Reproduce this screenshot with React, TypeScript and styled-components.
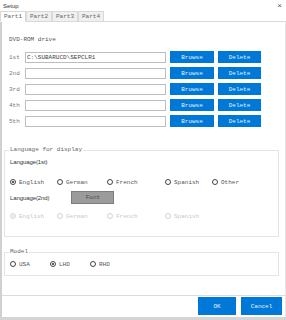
import React, { useState } from "react";
import styled, { createGlobalStyle } from "styled-components";

const GlobalStyle = createGlobalStyle`
  html, body {
    margin: 0;
    padding: 0;
    background: #ffffff;
  }
  * {
    box-sizing: border-box;
  }
`;

const Window = styled.div`
  width: 286px;
  height: 320px;
  display: flex;
  flex-direction: column;
  background: #ffffff;
  font-family: "Liberation Mono", monospace;
  font-size: 6px;
  color: #555;
  border-bottom: 3px solid #d4d4d4;
`;

const TitleBar = styled.div`
  height: 11px;
  display: flex;
  align-items: center;
  justify-content: space-between;
  padding: 0 4px 0 3px;
  font-family: "Liberation Sans", sans-serif;
  font-size: 6px;
  color: #333;
`;

const CloseGlyph = styled.span`
  font-size: 8px;
  line-height: 8px;
  color: #555;
`;

const TabBar = styled.div`
  height: 11px;
  display: flex;
  align-items: flex-end;
  border-bottom: 1px solid #d9d9d9;
`;

const Tab = styled.div<{ active?: boolean }>`
  width: 26px;
  height: ${(p) => (p.active ? "11px" : "10px")};
  display: flex;
  align-items: center;
  justify-content: center;
  background: ${(p) => (p.active ? "#ffffff" : "#f0f0f0")};
  border: 1px solid #d9d9d9;
  border-bottom: ${(p) => (p.active ? "1px solid #ffffff" : "none")};
  margin-bottom: ${(p) => (p.active ? "-1px" : "0")};
  color: #666;
  font-size: 6px;
`;

const Panel = styled.div`
  flex: 1;
  display: flex;
  flex-direction: column;
  border-left: 2px solid #d0d0d0;
  border-right: 1px solid #e6e6e6;
`;

const SectionLabel = styled.div`
  margin: 14px 0 0 7px;
  height: 8px;
  line-height: 8px;
`;

const DriveList = styled.div`
  display: flex;
  flex-direction: column;
  gap: 4px;
  margin-top: 7px;
`;

const DriveRow = styled.div`
  height: 12px;
  display: flex;
  align-items: center;
`;

const DriveName = styled.span`
  width: 16px;
  margin-left: 7px;
  color: #777;
`;

const PathInput = styled.div`
  width: 141px;
  height: 11px;
  border: 1px solid #bdbdbd;
  padding-left: 1px;
  line-height: 9px;
  color: #444;
`;

const BlueButton = styled.button<{ w: number }>`
  width: ${(p) => p.w}px;
  height: 12px;
  margin-left: 4px;
  padding: 0;
  border: none;
  background: #0078d7;
  color: #e8f2fb;
  font-family: "Liberation Mono", monospace;
  font-size: 6px;
`;

const GroupBox = styled.fieldset<{ top: number }>`
  margin: ${(p) => p.top}px 6px 0 2px;
  padding: 0 0 0 5px;
  border: 1px solid #e4e4e4;
  min-width: 0;
`;

const Legend = styled.legend`
  padding: 0 1px;
  margin-left: -1px;
  font-size: 6px;
  line-height: 8px;
  color: #666;
`;

const SubLabel = styled.div`
  font-family: "Liberation Sans", sans-serif;
  font-size: 6px;
  letter-spacing: -0.1px;
  color: #333;
  height: 8px;
  line-height: 8px;
`;

const RadioGrid = styled.div<{ cols: string }>`
  display: grid;
  grid-template-columns: ${(p) => p.cols};
  align-items: center;
  height: 8px;
`;

const RadioItem = styled.label<{ disabled?: boolean }>`
  display: flex;
  align-items: center;
  gap: 3px;
  color: ${(p) => (p.disabled ? "#c8c8c8" : "#555")};
`;

const RadioCircle = styled.span<{ checked?: boolean; disabled?: boolean }>`
  width: 6px;
  height: 6px;
  border-radius: 50%;
  border: 1px solid ${(p) => (p.disabled ? "#d2d2d2" : "#444")};
  display: flex;
  align-items: center;
  justify-content: center;
  &::after {
    content: "";
    width: 2px;
    height: 2px;
    border-radius: 50%;
    background: ${(p) =>
      p.checked ? (p.disabled ? "#d2d2d2" : "#222") : "transparent"};
  }
`;

const SecondRow = styled.div`
  display: flex;
  align-items: center;
  height: 13px;
`;

const FontButton = styled.button`
  width: 43px;
  height: 13px;
  margin-left: 22px;
  padding: 0;
  border: 1px solid #7d7d7d;
  background: #9b9b9b;
  color: #4a4a4a;
  font-family: "Liberation Mono", monospace;
  font-size: 6px;
`;

const Spacer = styled.div<{ h: number }>`
  height: ${(p) => p.h}px;
`;

const Footer = styled.div`
  margin-top: auto;
  height: 22px;
  border-top: 1px solid #dcdcdc;
  display: flex;
  justify-content: flex-end;
  align-items: flex-start;
  gap: 5px;
  padding: 1px 3px 0 0;
`;

const FooterButton = styled.button<{ w: number }>`
  width: ${(p) => p.w}px;
  height: 18px;
  padding: 0;
  border: none;
  background: #0078d7;
  color: #e8f2fb;
  font-family: "Liberation Mono", monospace;
  font-size: 6px;
`;

const drives = [
  { name: "1st", path: "C:\\SUBARUCD\\SEPCLR1" },
  { name: "2nd", path: "" },
  { name: "3rd", path: "" },
  { name: "4th", path: "" },
  { name: "5th", path: "" },
];

const languages = ["English", "German", "French", "Spanish", "Other"];

const Radio = ({
  label,
  checked,
  disabled,
  onPick,
}: {
  label: string;
  checked?: boolean;
  disabled?: boolean;
  onPick?: () => void;
}) => (
  <RadioItem disabled={disabled} onClick={disabled ? undefined : onPick}>
    <RadioCircle checked={checked} disabled={disabled} />
    {label}
  </RadioItem>
);

const App = () => {
  const [lang, setLang] = useState("English");
  const [model, setModel] = useState("LHD");

  return (
    <>
      <GlobalStyle />
      <Window>
        <TitleBar>
          <span>Setup</span>
          <CloseGlyph>×</CloseGlyph>
        </TitleBar>
        <TabBar>
          <Tab active>Part1</Tab>
          <Tab>Part2</Tab>
          <Tab>Part3</Tab>
          <Tab>Part4</Tab>
        </TabBar>
        <Panel>
          <SectionLabel>DVD-ROM drive</SectionLabel>
          <DriveList>
            {drives.map((d) => (
              <DriveRow key={d.name}>
                <DriveName>{d.name}</DriveName>
                <PathInput>{d.path}</PathInput>
                <BlueButton w={44}>Browse</BlueButton>
                <BlueButton w={43}>Delete</BlueButton>
              </DriveRow>
            ))}
          </DriveList>

          <GroupBox top={19}>
            <Legend>Language for display</Legend>
            <Spacer h={4} />
            <SubLabel>Language(1st)</SubLabel>
            <Spacer h={12} />
            <RadioGrid cols="47px 50px 58px 47px auto">
              {languages.map((l) => (
                <Radio
                  key={l}
                  label={l}
                  checked={lang === l}
                  onPick={() => setLang(l)}
                />
              ))}
            </RadioGrid>
            <Spacer h={5} />
            <SecondRow>
              <SubLabel>Language(2nd)</SubLabel>
              <FontButton>Font</FontButton>
            </SecondRow>
            <Spacer h={8} />
            <RadioGrid cols="47px 50px 58px 47px auto">
              {languages.slice(0, 4).map((l) => (
                <Radio key={l} label={l} checked={l === "English"} disabled />
              ))}
            </RadioGrid>
            <Spacer h={16} />
          </GroupBox>

          <GroupBox top={11}>
            <Legend>Model</Legend>
            <Spacer h={4} />
            <RadioGrid cols="40px 40px auto">
              {["USA", "LHD", "RHD"].map((m) => (
                <Radio
                  key={m}
                  label={m}
                  checked={model === m}
                  onPick={() => setModel(m)}
                />
              ))}
            </RadioGrid>
            <Spacer h={7} />
          </GroupBox>

          <Footer>
            <FooterButton w={38}>OK</FooterButton>
            <FooterButton w={41}>Cancel</FooterButton>
          </Footer>
        </Panel>
      </Window>
    </>
  );
};

export default App;
